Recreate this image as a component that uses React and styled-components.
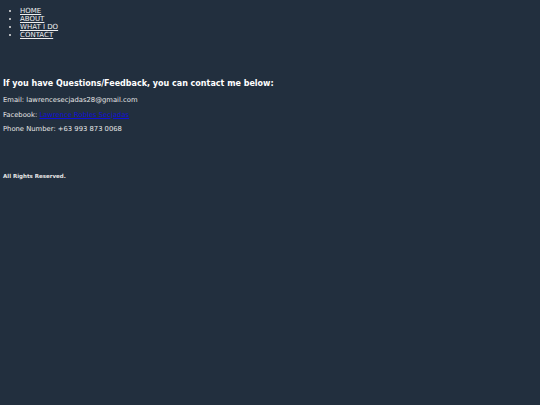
import React from 'react';
import styled, { createGlobalStyle } from 'styled-components';

const GlobalStyle = createGlobalStyle`
  html, body {
    margin: 0;
    padding: 0;
    background: #222f3e;
  }
  body {
    min-height: 405px;
    padding: 4px 3px;
    box-sizing: border-box;
    font-family: "DejaVu Sans", sans-serif;
    color: #e6e6e6;
  }
`;

const Nav = styled.ul`
  margin: 0;
  padding: 3px 0 0 17px;
  list-style: disc;
  font-size: 7px;
  line-height: 8px;
`;

const NavLink = styled.a`
  color: #f0f0f0;
  text-decoration: underline;
`;

const Contact = styled.section`
  padding-top: 40px;
`;

const Heading = styled.h3`
  margin: 0 0 7px;
  font-size: 8px;
  line-height: 10px;
  font-weight: bold;
  color: #ffffff;
`;

const Line = styled.p`
  margin: 0 0 6px;
  font-size: 6.8px;
  line-height: 8.5px;
`;

const FbLink = styled.a`
  color: #1010d8;
  text-decoration: underline;
`;

const Footer = styled.footer`
  padding-top: 33px;
  font-size: 5.5px;
  font-weight: bold;
`;

const links = ['HOME', 'ABOUT', 'WHAT I DO', 'CONTACT'];

export default function App() {
  return (
    <>
      <GlobalStyle />
      <Nav>
        {links.map(l => (
          <li key={l}>
            <NavLink href="#">{l}</NavLink>
          </li>
        ))}
      </Nav>
      <Contact>
        <Heading>If you have Questions/Feedback, you can contact me below:</Heading>
        <Line>Email: lawrencesecjadas28@gmail.com</Line>
        <Line>
          Facebook: <FbLink href="#">Lawrence Robles Secjadas</FbLink>
        </Line>
        <Line>Phone Number: +63 993 873 0068</Line>
      </Contact>
      <Footer>All Rights Reserved.</Footer>
    </>
  );
}
